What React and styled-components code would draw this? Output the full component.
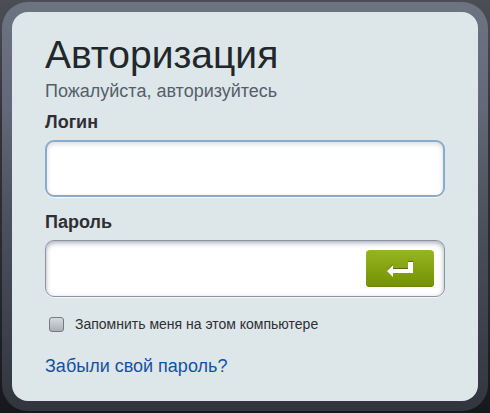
import React, { useState } from 'react'
import styled, { createGlobalStyle } from 'styled-components'

const GlobalStyle = createGlobalStyle`
  * {
    box-sizing: border-box;
  }

  body {
    margin: 0;
    min-height: 100vh;
    background: linear-gradient(#4b4f55, #303338 30%, #25282c 70%, #16181b);
    font-family: 'Liberation Sans', Arial, sans-serif;
    color: #2f2f33;
  }
`;

const Page = styled.main`
  padding: 2px;
`;

const Frame = styled.div`
  padding: 10px;
  border-radius: 26px;
  background: linear-gradient(#6c7381, #636978 25%, #4d545f 50%, #3f444f 75%, #31353e);
`;

const Panel = styled.section`
  padding: 19px 33px 23px;
  border-radius: 16px;
  background: #dde6e9;
`;

const Title = styled.h1`
  margin: 0;
  font-size: 39px;
  line-height: 48px;
  font-weight: normal;
  color: #22272c;
`;

const Subtitle = styled.p`
  margin: 0 0 7px;
  font-size: 18px;
  line-height: 24px;
  color: #555f69;
`;

const Field = styled.div`
  margin-bottom: 13px;
`;

const Label = styled.label`
  display: block;
  margin-bottom: 6px;
  font-size: 18px;
  line-height: 24px;
  font-weight: bold;
`;

const InputBox = styled.div`
  display: flex;
  align-items: center;
  height: 57px;
  padding-right: ${props => (props.$active ? '9px' : '10px')};
  border: ${props => (props.$active ? '2px solid #8aabcb' : '1px solid #8b94a3')};
  border-radius: 9px;
  background: #fff;
  box-shadow: inset 0 2px 5px rgba(60, 75, 95, ${props => (props.$active ? 0.2 : 0.45)}), 0 1px 0 #f4f8f9;
`;

const Input = styled.input`
  flex: 1;
  min-width: 0;
  height: 100%;
  padding: 0 12px;
  border: none;
  outline: none;
  background: transparent;
  font: inherit;
  font-size: 18px;
  color: inherit;
`;

const SubmitButton = styled.button`
  display: flex;
  align-items: center;
  justify-content: center;
  width: 68px;
  height: 37px;
  padding: 0;
  border: none;
  border-radius: 4px;
  background: linear-gradient(#97b422, #739100);
  box-shadow: inset 0 -1px 0 #6b8600;
  cursor: pointer;
`;

const Remember = styled.div`
  display: flex;
  align-items: center;
  margin: 17px 0 20px;
  padding-left: 4px;
  font-size: 14px;
  line-height: 20px;
`;

const Checkbox = styled.input`
  appearance: none;
  width: 15px;
  height: 15px;
  margin: 0 11px 0 0;
  border: 1px solid #737c82;
  border-radius: 3px;
  background: linear-gradient(#d6dadc, #a9b0b4);

  &:checked {
    background: #5d7fa3;
  }
`;

const ForgotLink = styled.a`
  display: block;
  font-size: 18px;
  line-height: 24px;
  color: #1552a0;
  text-decoration: none;

  &:hover {
    text-decoration: underline;
  }
`;

function EnterIcon() {
  return (
    <svg width="26" height="17" viewBox="0 0 26 17" aria-hidden="true">
      {/* dark edge above the arrow */}
      <path d="M0 10 L6 4 V8 H21 V1 H26 V13 H6 Z" fill="#566d08" />
      <path d="M0 11 L6 5 V9 H21 V2 H26 V13 H6 V17 Z" fill="#fff" />
    </svg>
  )
}

function App() {
  const [formData, setFormData] = useState({ login: "", password: "", remember: false })
  const [active, setActive] = useState('login')

  function handleChange(e) {
    const { name, value, type, checked } = e.target
    setFormData(prev => ({
      ...prev,
      [name]: type === 'checkbox' ? checked : value
    }))
  }

  return (
    <Page>
      <GlobalStyle />
      <Frame>
        <Panel>
          <Title>Авторизация</Title>
          <Subtitle>Пожалуйста, авторизуйтесь</Subtitle>
          <form onSubmit={e => e.preventDefault()}>
            <Field>
              <Label htmlFor="login">Логин</Label>
              <InputBox $active={active === 'login'}>
                <Input
                  id="login"
                  name="login"
                  type="text"
                  value={formData.login}
                  onChange={handleChange}
                  onFocus={() => setActive('login')}
                />
              </InputBox>
            </Field>
            <Field>
              <Label htmlFor="password">Пароль</Label>
              <InputBox $active={active === 'password'}>
                <Input
                  id="password"
                  name="password"
                  type="password"
                  value={formData.password}
                  onChange={handleChange}
                  onFocus={() => setActive('password')}
                />
                <SubmitButton type="submit" aria-label="Войти">
                  <EnterIcon />
                </SubmitButton>
              </InputBox>
            </Field>
            <Remember>
              <Checkbox
                id="remember"
                name="remember"
                type="checkbox"
                checked={formData.remember}
                onChange={handleChange}
              />
              <label htmlFor="remember">Запомнить меня на этом компьютере</label>
            </Remember>
            <ForgotLink href="#forgot">Забыли свой пароль?</ForgotLink>
          </form>
        </Panel>
      </Frame>
    </Page>
  )
}

export default App
